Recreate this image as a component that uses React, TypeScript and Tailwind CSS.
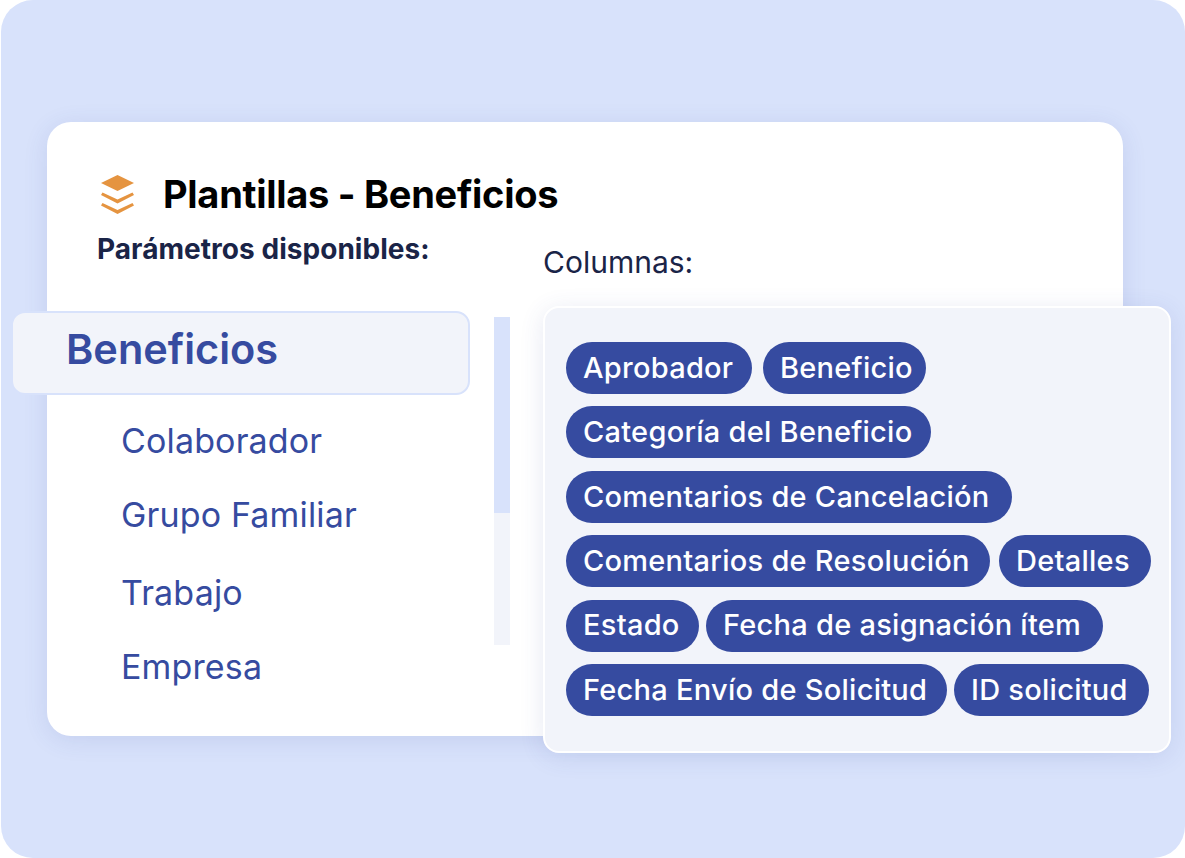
const rows: [string, string][][] = [
  [["Aprobador", "w-[186px]"], ["Beneficio", "w-[163px] ml-[11px]"]],
  [["Categoría del Beneficio", "w-[365px]"]],
  [["Comentarios de Cancelación", "w-[446px]"]],
  [["Comentarios de Resolución", "w-[424px]"], ["Detalles", "w-[152px] ml-[9px]"]],
  [["Estado", "w-[133px]"], ["Fecha de asignación ítem", "w-[397px] ml-[7px]"]],
  [["Fecha Envío de Solicitud", "w-[381px]"], ["ID solicitud", "w-[195px] ml-[7px]"]],
];

function LayersIcon() {
  return (
    <svg width="33" height="40" viewBox="0 0 33 40" className="shrink-0">
      <path d="M16.5 1 L33 9 L16.5 17 L0 9 Z" fill="#e59440" />
      <path d="M0 21 L1.5 18.5 L16.5 25.5 L31.5 18.5 L33 21 L16.5 29.5 Z" fill="#e59440" />
      <path d="M0 31.5 L1.5 29 L16.5 36 L31.5 29 L33 31.5 L16.5 40 Z" fill="#e59440" />
    </svg>
  );
}

export default function App() {
  return (
    <div className="w-[1185px] h-[858px] bg-white overflow-hidden font-['Inter',sans-serif]">
      <div className="ml-px w-[1184px] h-[858px] rounded-[32px] bg-[#d8e2fb] pt-[122px] pl-[46px]">
        <div className="w-[1076px] h-[614px] rounded-[24px] bg-white shadow-[0_4px_24px_rgba(56,75,160,0.12)] pt-[52px]">
          <div className="flex items-center pl-[54px] h-[40px]">
            <LayersIcon />
            <h1 className="ml-[29px] text-[38px] leading-[40px] font-bold tracking-[-0.28px] text-black">Plantillas - Beneficios</h1>
          </div>
          <div className="flex items-start">
            <div className="w-[496px] shrink-0">
              <p className="ml-[50px] mt-[19px] text-[28px] leading-[32px] font-bold tracking-[0.04px] text-[#1a2447] whitespace-nowrap">Parámetros disponibles:</p>
              <div className="flex mt-[46px] -ml-[36px]">
                <div className="w-[459px] shrink-0">
                  <div className="h-[84px] pb-[8px] rounded-[14px] bg-[#f2f4fa] border-2 border-[#d8e2fb] flex items-center pl-[53px] text-[41.5px] font-semibold text-[#364ba0]">Beneficios</div>
                  <ul className="pl-[110px] text-[34px] tracking-[0.15px] leading-[40px] text-[#364ba0]">
                    <li className="mt-[26px]">Colaborador</li>
                    <li className="mt-[34px]">Grupo Familiar</li>
                    <li className="mt-[38px]">Trabajo</li>
                    <li className="mt-[34px]">Empresa</li>
                  </ul>
                </div>
                <div className="ml-[24px] mt-[6px] w-[16px] h-[328px] bg-[#f2f4fa] shrink-0">
                  <div className="h-[196px] bg-[#d8e2fb]" />
                </div>
              </div>
            </div>
            <div>
              <p className="text-[30px] leading-[36px] text-[#1a2447] mt-[30px]">Columnas:</p>
              <div className="relative mt-[26px] w-[628px] h-[447px] rounded-[16px] bg-[#f2f4fa] border-2 border-white shadow-[0_4px_24px_rgba(56,75,160,0.12)] pt-[34px] pl-[21px]">
                <div className="flex flex-col gap-[12.4px]">
                  {rows.map((row, i) => (
                    <div key={i} className="flex">
                      {row.map(([label, size]) => (
                        <span key={label} className={`h-[52px] pb-px rounded-full bg-[#364ba0] pl-[17px] flex items-center text-[29px] font-[550] tracking-[0.26px] text-white whitespace-nowrap ${size}`}>{label}</span>
                      ))}
                    </div>
                  ))}
                </div>
              </div>
            </div>
          </div>
        </div>
      </div>
    </div>
  );
}
